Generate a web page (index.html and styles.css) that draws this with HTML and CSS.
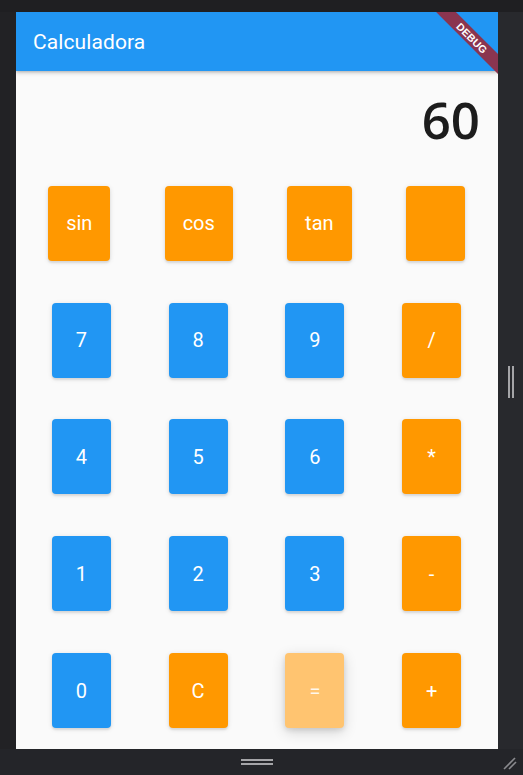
FILE: index.html
```html
<!DOCTYPE html>
<html lang="es">
<head>
<meta charset="utf-8">
<title>Calculadora</title>
<link rel="stylesheet" href="styles.css">
</head>
<body>
<div class="frame">
  <div class="top-band"></div>
  <div class="middle">
    <div class="left-band"></div>
    <div class="screen">
      <header class="appbar"><span class="title">Calculadora</span></header>
      <div class="display"><span class="value">60</span></div>
      <div class="keys">
        <div class="row row-fn">
          <button class="key orange">sin</button>
          <button class="key orange">cos</button>
          <button class="key orange">tan</button>
          <button class="key orange"></button>
        </div>
        <div class="row">
          <button class="key blue">7</button>
          <button class="key blue">8</button>
          <button class="key blue">9</button>
          <button class="key orange">/</button>
        </div>
        <div class="row">
          <button class="key blue">4</button>
          <button class="key blue">5</button>
          <button class="key blue">6</button>
          <button class="key orange">*</button>
        </div>
        <div class="row">
          <button class="key blue">1</button>
          <button class="key blue">2</button>
          <button class="key blue">3</button>
          <button class="key orange">-</button>
        </div>
        <div class="row">
          <button class="key blue">0</button>
          <button class="key orange">C</button>
          <button class="key light">=</button>
          <button class="key orange">+</button>
        </div>
      </div>
      <div class="banner-box"><div class="banner">DEBUG</div></div>
    </div>
    <div class="right-band">
      <div class="vhandle"><span></span><span></span></div>
    </div>
  </div>
  <div class="bottom-band">
    <div class="hhandle"><span></span><span></span></div>
    <svg class="grip" width="16" height="16" viewBox="0 0 16 16">
      <line x1="2" y1="14" x2="13" y2="3" stroke="#8a8a8e" stroke-width="1.6"/>
      <line x1="7" y1="14" x2="14" y2="7" stroke="#8a8a8e" stroke-width="1.6"/>
    </svg>
  </div>
</div>
</body>
</html>
```

FILE: styles.css
```css
* { box-sizing: border-box; }
html, body { margin: 0; padding: 0; }
body {
  width: 523px;
  height: 775px;
  overflow: hidden;
  background: #222326;
  font-family: Roboto, "Liberation Sans", sans-serif;
}
.frame {
  width: 523px;
  height: 775px;
  display: flex;
  flex-direction: column;
}
.top-band {
  height: 12px;
  background: #1f1f22;
}
.middle {
  display: flex;
  height: 737px;
}
.left-band {
  width: 16px;
  background: #222225;
}
.screen {
  position: relative;
  width: 482px;
  height: 737px;
  background: #fafafa;
  display: flex;
  flex-direction: column;
  overflow: hidden;
}
.right-band {
  width: 25px;
  background: #28292d;
  display: flex;
  align-items: center;
  justify-content: center;
}
.vhandle {
  display: flex;
  gap: 2px;
  margin-top: 2px;
}
.vhandle span {
  width: 2px;
  height: 32px;
  background: #a5a5a8;
}
.appbar {
  height: 59px;
  flex: none;
  background: #2196f3;
  display: flex;
  align-items: center;
  padding-left: 17px;
  box-shadow: 0 2px 4px rgba(0,0,0,0.18), 0 1px 2px rgba(0,0,0,0.12);
  position: relative;
  z-index: 1;
}
.title {
  color: #fff;
  font-size: 21px;
  font-weight: 400;
  letter-spacing: 0.1px;
}
.display {
  height: 94px;
  flex: none;
  display: flex;
  justify-content: flex-end;
  align-items: center;
  padding-right: 18px;
}
.value {
  font-family: "Open Sans", Roboto, sans-serif;
  font-weight: 600;
  font-size: 51px;
  color: #1c1c1c;
  line-height: 1;
  margin-top: 2px;
}
.keys {
  flex: 1;
  display: flex;
  flex-direction: column;
  justify-content: space-around;
}
.row {
  display: flex;
  justify-content: space-around;
  padding: 0 8px 0 7px;
}
.row-fn {
  padding: 0 6px 0 5px;
}
.key {
  height: 75px;
  min-width: 59px;
  padding: 0 18px;
  border: none;
  border-radius: 4px;
  color: #fff;
  font-family: Roboto, "Liberation Sans", sans-serif;
  font-size: 20px;
  font-weight: 400;
  display: flex;
  align-items: center;
  justify-content: center;
  box-shadow: 0 1px 5px rgba(0,0,0,0.12), 0 2px 2px rgba(0,0,0,0.08);
}
.blue { background: #2196f3; }
.orange { background: #ff9800; }
.light {
  background: #ffc470;
  color: #fff8ec;
  box-shadow: 0 4px 14px rgba(0,0,0,0.16), 0 2px 5px rgba(0,0,0,0.1);
}
.banner-box {
  position: absolute;
  top: 0;
  right: 0;
  width: 64px;
  height: 64px;
  overflow: hidden;
  z-index: 2;
}
.banner {
  position: absolute;
  width: 120px;
  height: 14px;
  left: calc(64px - 26px - 60px);
  top: calc(26px - 7px);
  transform: rotate(45deg);
  background: #8a3550;
  color: #fff;
  font-family: "Liberation Sans", Roboto, sans-serif;
  font-weight: 700;
  font-size: 10.5px;
  line-height: 14px;
  text-align: center;
  letter-spacing: 0.1px;
}
.bottom-band {
  height: 26px;
  background: #242529;
  position: relative;
  display: flex;
  justify-content: center;
  align-items: center;
}
.hhandle {
  display: flex;
  flex-direction: column;
  gap: 2px;
  margin-left: -10px;
}
.hhandle span {
  width: 32px;
  height: 2px;
  background: #a5a5a8;
}
.grip {
  position: absolute;
  right: 5px;
  bottom: 4px;
}
```
